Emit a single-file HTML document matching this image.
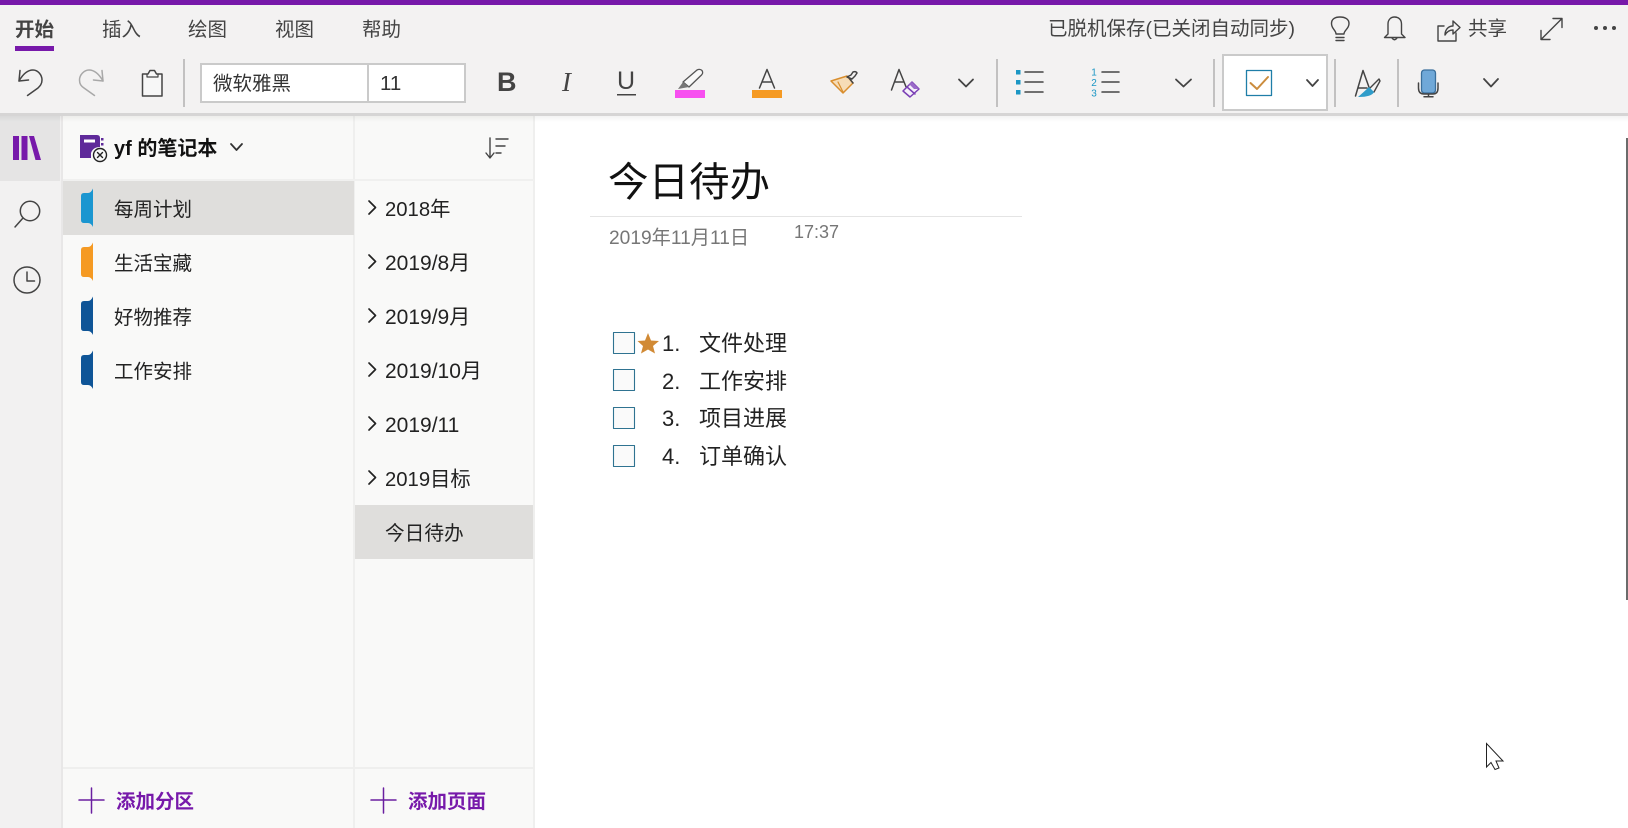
<!DOCTYPE html>
<html lang="zh"><head><meta charset="utf-8"><title>OneNote</title>
<style>
html,body{margin:0;padding:0;width:1628px;height:828px;overflow:hidden;background:#fff}
body{position:relative;font-family:"Liberation Sans","Noto Sans CJK SC",sans-serif;color:#444}
.b{position:absolute}
.t{position:absolute;white-space:nowrap;line-height:30px;height:30px}
svg{position:absolute;left:0;top:0}
</style></head><body>
<div class="b" style="left:0;top:0;width:1628px;height:5px;background:#7719aa"></div>
<div class="b" style="left:0;top:5px;width:1628px;height:108px;background:#f3f2f2"></div>
<div class="b" style="left:0;top:116px;width:62px;height:712px;background:#f2f1f1"></div>
<div class="b" style="left:0;top:116px;width:60px;height:65px;background:#e5e4e4"></div>
<div class="b" style="left:61px;top:116px;width:2px;height:712px;background:#e8e7e7"></div>
<div class="b" style="left:63px;top:116px;width:471px;height:712px;background:#f9f9f8"></div>
<div class="b" style="left:353px;top:116px;width:2px;height:712px;background:#efefee"></div>
<div class="b" style="left:533px;top:116px;width:2px;height:712px;background:#efefee"></div>
<div class="b" style="left:63px;top:179px;width:471px;height:2px;background:#f0f0ef"></div>
<div class="b" style="left:63px;top:767px;width:471px;height:2px;background:#efefee"></div>
<div class="b" style="left:63px;top:181px;width:291px;height:54px;background:#dfdedc"></div>
<div class="b" style="left:355px;top:505px;width:178px;height:54px;background:#dfdedc"></div>
<div class="b" style="left:0;top:113px;width:1628px;height:3px;background:#d6d5d5"></div>
<div class="b" style="left:0;top:116px;width:1628px;height:6px;background:linear-gradient(rgba(0,0,0,.05),rgba(0,0,0,0))"></div>
<div class="b" style="left:1626px;top:138px;width:2px;height:462px;background:#6b6b6b"></div>
<div class="b" style="left:200px;top:63px;width:266px;height:40px;box-sizing:border-box;background:#fff;border:2px solid #cacaca"></div>
<div class="b" style="left:367px;top:63px;width:2px;height:40px;background:#cacaca"></div>
<div class="b" style="left:1222px;top:54px;width:106px;height:57px;box-sizing:border-box;background:#fff;border:2px solid #cacaca"></div>
<div class="b" style="left:15px;top:46px;width:39px;height:5px;background:#7719aa"></div>

<div class="t" style="left:15px;top:15px;font-size:19.5px;font-weight:700;color:#444">开始</div>
<div class="t" style="left:102px;top:15px;font-size:19.5px">插入</div>
<div class="t" style="left:188px;top:15px;font-size:19.5px">绘图</div>
<div class="t" style="left:275px;top:15px;font-size:19.5px">视图</div>
<div class="t" style="left:362px;top:15px;font-size:19.5px">帮助</div>
<div class="t" style="left:1048px;top:14px;font-size:19.5px">已脱机保存(已关闭自动同步)</div>
<div class="t" style="left:1468px;top:14px;font-size:19.5px">共享</div>
<div class="t" style="left:213px;top:69px;font-size:19.5px;color:#333">微软雅黑</div>
<div class="t" style="left:380px;top:69px;font-size:20.500px;color:#333">11</div>
<div class="t" style="left:497px;top:67px;font-size:27px;font-weight:700;color:#444">B</div>
<div class="t" style="left:562px;top:67px;font-size:27px;font-style:italic;font-family:'Liberation Serif',serif;color:#444">I</div>
<div class="t" style="left:617px;top:66px;font-size:25px;color:#444">U</div>

<div class="t" style="left:114px;top:134px;font-size:20px;font-weight:700;color:#111">yf 的笔记本</div>
<div class="t" style="left:114px;top:195px;font-size:19.5px;color:#222">每周计划</div>
<div class="t" style="left:114px;top:249px;font-size:19.5px;color:#222">生活宝藏</div>
<div class="t" style="left:114px;top:303px;font-size:19.5px;color:#222">好物推荐</div>
<div class="t" style="left:114px;top:357px;font-size:19.5px;color:#222">工作安排</div>
<div class="t" style="left:385px;top:195px;font-size:20.300px;color:#222">2018年</div>
<div class="t" style="left:385px;top:249px;font-size:21px;color:#222">2019/8月</div>
<div class="t" style="left:385px;top:303px;font-size:21px;color:#222">2019/9月</div>
<div class="t" style="left:385px;top:357px;font-size:21px;color:#222">2019/10月</div>
<div class="t" style="left:385px;top:411px;font-size:21px;color:#222">2019/11</div>
<div class="t" style="left:385px;top:465px;font-size:20.300px;color:#222">2019目标</div>
<div class="t" style="left:385px;top:519px;font-size:19.700px;color:#222">今日待办</div>
<div class="t" style="left:116px;top:787px;font-size:19.5px;font-weight:700;color:#7719aa">添加分区</div>
<div class="t" style="left:408px;top:787px;font-size:19.5px;font-weight:700;color:#7719aa">添加页面</div>

<div class="t" style="left:608px;top:157px;height:50px;line-height:50px;font-size:40.500px;color:#111">今日待办</div>
<div class="t" style="left:609px;top:224px;font-size:19.200px;color:#767676">2019年11月11日</div>
<div class="t" style="left:794px;top:217px;font-size:18px;color:#767676">17:37</div>
<div class="b" style="left:590px;top:216px;width:432px;height:1px;background:#e4e4e4"></div>

<div class="t" style="left:662px;top:329px;font-size:22px;color:#222">1.</div>
<div class="t" style="left:699px;top:329px;font-size:22px;color:#222">文件处理</div>
<div class="t" style="left:662px;top:367px;font-size:22px;color:#222">2.</div>
<div class="t" style="left:699px;top:367px;font-size:22px;color:#222">工作安排</div>
<div class="t" style="left:662px;top:404px;font-size:22px;color:#222">3.</div>
<div class="t" style="left:699px;top:404px;font-size:22px;color:#222">项目进展</div>
<div class="t" style="left:662px;top:442px;font-size:22px;color:#222">4.</div>
<div class="t" style="left:699px;top:442px;font-size:22px;color:#222">订单确认</div>

<svg width="1628" height="828" viewBox="0 0 1628 828" fill="none" stroke-linecap="round" stroke-linejoin="round">
<g fill="#c2c1c1">
<rect x="183" y="59" width="2" height="48"/><rect x="996" y="59" width="2" height="48"/><rect x="1213" y="59" width="2" height="48"/><rect x="1334" y="59" width="2" height="48"/><rect x="1397" y="59" width="2" height="48"/>
</g>
<!-- undo / redo -->
<g stroke="#444" stroke-width="1.5"><path d="M20 70.5 L19 81 L28.5 80"/><path d="M19 81 C23 74 28 70 33 70 C38 70 42 75 42 80 C42 84 40 86 38 88 L27.5 95.5"/></g>
<g stroke="#a8a8a8" stroke-width="1.5"><path d="M102 70.5 L103 81 L93.5 80"/><path d="M103 81 C99 74 94 70 89 70 C84 70 79.500 75 79.500 80 C79.500 84 81 86 84 88 L94.500 95.500"/></g>
<!-- clipboard -->
<path d="M142.500 74 H148 L150 70.500 H154.500 L156.500 74 H162 V96 H142.500 Z" stroke="#444" stroke-width="1.5" fill="#f7f7f7"/>
<path d="M147 74 V77 H158 V74" stroke="#444" stroke-width="1.200"/>
<rect x="617" y="94" width="19" height="1.500" fill="#444"/>
<!-- highlighter -->
<path d="M683 82 L697 70 Q700 68.500 702 70.500 Q703.500 73 701.500 75 L689 87 Z" stroke="#555" stroke-width="1.300" fill="#f9f9f9"/>
<path d="M683 82 L678 89 L689 87 Z" fill="#777"/>
<rect x="675" y="90" width="30" height="8" fill="#f74ff0"/>
<!-- font colour -->
<path d="M759.500 88 L767 69.500 L774.500 88 M762 82 H772" stroke="#444" stroke-width="1.500"/>
<rect x="752" y="90" width="30" height="8" fill="#f59a23"/>
<!-- format painter -->
<path d="M831 81 L847 76 L853 83 L843 93 Z" stroke="#d98e2e" stroke-width="1.500" fill="#f6dcb6"/>
<path d="M838 82 L843 92" stroke="#d98e2e" stroke-width="1.200"/>
<path d="M847 77 L852 79 L855 76 L857 73 Q856 71 853 72 L851 75 Z M849 78 L853 83" stroke="#444" stroke-width="1.500" fill="#f3f2f2"/>
<!-- clear format -->
<path d="M891.500 90 L899 69.500 L906.500 88 M894.500 82 H904" stroke="#444" stroke-width="1.500"/>
<path d="M903 91 L912 82 L919 89 L910 97 Z" stroke="#7a3fb5" stroke-width="1.500" fill="#f5f0fa"/>
<path d="M907 87 L915 94" stroke="#7a3fb5" stroke-width="1.500"/>
<path d="M909 84 L914 89 L919 89 L912 82 Z" fill="#9a6ac9"/>
<!-- chevrons -->
<g stroke="#444" stroke-width="1.800">
<path d="M959 79.500 L966 86.500 L973 79.500"/>
<path d="M1176 79.500 L1183.500 86.500 L1191 79.500"/>
<path d="M1307 80 L1312.500 86 L1318 80"/>
<path d="M1484 79 L1491 86.500 L1498 79"/>
<path d="M231 144 L236.500 150 L242 144" stroke-width="1.800" stroke="#333"/>
</g>
<!-- bullets -->
<g fill="#1b96c4"><rect x="1016" y="70" width="4.500" height="4.500"/><rect x="1016" y="80" width="4.500" height="4.500"/><rect x="1016" y="90" width="4.500" height="4.500"/></g>
<g stroke="#444" stroke-width="1.500"><path d="M1025 72 H1043 M1025 82 H1043 M1025 92 H1043 M1102 72 H1119 M1102 82 H1119 M1102 92 H1119"/></g>
<text x="1094" y="75.500" font-size="10" fill="#1b96c4" font-family="Liberation Sans" text-anchor="middle">1</text>
<text x="1094" y="86" font-size="10" fill="#1b96c4" font-family="Liberation Sans" text-anchor="middle">2</text>
<text x="1094" y="96.500" font-size="10" fill="#1b96c4" font-family="Liberation Sans" text-anchor="middle">3</text>
<!-- todo box -->
<rect x="1246.500" y="70.500" width="25" height="25" stroke="#1f7ea8" stroke-width="1.300"/>
<path d="M1250.500 83 L1257 89 L1268 77" stroke="#cb8c3e" stroke-width="2"/>
<!-- pen -->
<path d="M1355.500 96 L1363 70.500 L1370 90 M1358 88 H1367" stroke="#444" stroke-width="1.500"/>
<path d="M1370 88 L1379 79 L1380 81 L1374 92" stroke="#444" stroke-width="1.400"/>
<path d="M1358 97 Q1366 90 1369 87 L1374 92 Q1372 97 1358 97 Z" fill="#2f9cc9"/>
<!-- mic -->
<rect x="1421.500" y="70" width="14" height="23" rx="3" fill="#6fa8d8" stroke="#3a6f9c" stroke-width="1.300"/>
<path d="M1418.500 83 V88 Q1418.500 94 1424 94 H1433 Q1438 94 1438 88 V83 M1428.500 94 V96.500 M1424 96.800 H1433" stroke="#444" stroke-width="1.500"/>
<!-- top right -->
<g stroke="#444" stroke-width="1.400">
<path d="M1336 40.500 H1344 M1336 37.500 H1344 M1336 34 C1336 30 1331.500 29 1331.500 23.500 C1331.500 19 1335 17 1340 17 C1345 17 1349 19 1349 23.500 C1349 29 1344 30 1344 34 Z"/>
<path d="M1388 34 V24 C1388 19.500 1391 17 1394.500 17 C1398.500 17 1401.500 19.500 1401.500 24 V34 L1405 37.500 H1384.500 Z M1392 38 Q1394.500 41.500 1397 38"/>
<path d="M1444 26 H1438 V41 H1456 V33"/>
<path d="M1445 35 C1445 29 1449 26 1453 26 V21 L1460 27.500 L1453 34 V30 C1450 30 1447 31.500 1445 35 Z"/>
<path d="M1541 39.500 L1562 18.500 M1553 18.500 H1562 V27.500 M1541 30.500 V39.500 H1550"/>
</g>
<g fill="#444"><circle cx="1596" cy="28" r="2"/><circle cx="1605" cy="28" r="2"/><circle cx="1614" cy="28" r="2"/></g>
<!-- rail -->
<g fill="#7719aa"><rect x="13" y="136" width="6" height="24"/><rect x="21.500" y="136" width="6" height="24"/><path d="M29 136 H34 L41 160 H35.500 Z"/></g>
<g stroke="#444" stroke-width="1.500">
<circle cx="30" cy="211" r="9.700"/><path d="M23 218 L15 227"/>
<circle cx="27" cy="280" r="13"/><path d="M27 272 V281 H34.500"/>
</g>
<!-- notebook -->
<path d="M80 135 H97 Q100 135 100 138 V147 Q93 147 91 153 V158 H80 Z" fill="#5f2a9a"/>
<rect x="84" y="139.500" width="11" height="3" fill="#fff"/>
<g fill="#5f2a9a"><rect x="101" y="138" width="2.500" height="2.500"/><rect x="101" y="143" width="2.500" height="2.500"/></g>
<circle cx="100" cy="155" r="6.500" fill="#f9f9f8" stroke="#222" stroke-width="1.400"/>
<path d="M97.500 152.500 L102.500 157.500 M102.500 152.500 L97.500 157.500" stroke="#222" stroke-width="1.400"/>
<!-- sort -->
<g stroke="#444" stroke-width="1.400" transform="translate(-4,0)"><path d="M494 138 V157 M490 153 L494 158 L498 153 M500 139 H512 M500 146 H509 M500 153 H505"/></g>
<!-- section tabs -->
<path d="M93 188.500 V227 Q91 223 88 223 H84 Q81 223 81 220 V196 Q81 193 84 193 H88 Q91 193 93 188.500 Z" fill="#1b96d0"/>
<path d="M93 242.500 V281 Q91 277 88 277 H84 Q81 277 81 274 V250 Q81 247 84 247 H88 Q91 247 93 242.500 Z" fill="#f59a23"/>
<path d="M93 296.500 V335 Q91 331 88 331 H84 Q81 331 81 328 V304 Q81 301 84 301 H88 Q91 301 93 296.500 Z" fill="#0f5597"/>
<path d="M93 350.500 V389 Q91 385 88 385 H84 Q81 385 81 382 V358 Q81 355 84 355 H88 Q91 355 93 350.500 Z" fill="#0f5597"/>
<!-- page chevrons -->
<g stroke="#222" stroke-width="1.700">
<path d="M369 201 L375.500 207.500 L369 214"/>
<path d="M369 255 L375.500 261.500 L369 268"/>
<path d="M369 309 L375.500 315.500 L369 322"/>
<path d="M369 363 L375.500 369.500 L369 376"/>
<path d="M369 417 L375.500 423.500 L369 430"/>
<path d="M369 471 L375.500 477.500 L369 484"/>
</g>
<!-- add plus -->
<g stroke="#6a1fa0" stroke-width="1.500"><path d="M79 800 H104 M91.500 788 V813 M371 800 H396 M383.500 788 V813"/></g>
<!-- checklist -->
<g stroke="#2f7391" stroke-width="1.100" fill="#fafafa">
<rect x="613.500" y="332.500" width="21" height="21"/><rect x="613.500" y="369.500" width="21" height="21"/><rect x="613.500" y="407.500" width="21" height="21"/><rect x="613.500" y="445.500" width="21" height="21"/>
</g>
<path d="M648 333 L651 340.500 L659 341 L653 346 L655 353.500 L648 349.500 L641 353.500 L643 346 L637.500 341 L645 340.500 Z" fill="#d18a35"/>
<!-- cursor -->
<path d="M1486.500 743.500 V767 L1491 762.500 L1495 769.500 L1499 768 L1496 761 H1503 Z" fill="#fff" stroke="#222" stroke-width="1" stroke-linejoin="miter"/>
</svg>
</body></html>
